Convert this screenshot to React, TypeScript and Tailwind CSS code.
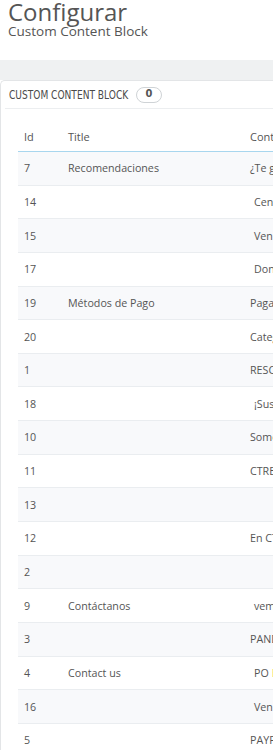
const rows: { id: string; title: string; content: string; pad?: boolean; extra?: string }[] = [
  { id: "7", title: "Recomendaciones", content: "¿Te gustaría recibir recomendaciones?" },
  { id: "14", title: "", content: "Centro de ayuda", pad: true },
  { id: "15", title: "", content: "Vende con nosotros", pad: true },
  { id: "17", title: "", content: "Dona ahora", pad: true },
  { id: "19", title: "Métodos de Pago", content: "Pagar con tarjeta" },
  { id: "20", title: "", content: "Categorías" },
  { id: "1", title: "", content: "RESCATE" },
  { id: "18", title: "", content: "¡Suscríbete!", pad: true },
  { id: "10", title: "", content: "Somos" },
  { id: "11", title: "", content: "CTRESCATE" },
  { id: "13", title: "", content: "" },
  { id: "12", title: "", content: "En CTRESCATE" },
  { id: "2", title: "", content: "" },
  { id: "9", title: "Contáctanos", content: "vemos", pad: true },
  { id: "3", title: "", content: "PANDEMIA" },
  { id: "4", title: "Contact us", content: "PO", pad: true, extra: "Box" },
  { id: "16", title: "", content: "Vende", pad: true },
  { id: "5", title: "", content: "PAYPAL" },
];

export default function App() {
  return (
    <div className="w-[273px] h-[750px] overflow-hidden bg-white text-[#555] font-['Open_Sans',sans-serif]">
      <div className="h-[60px] pl-2">
        <h1 className="text-[24px] leading-[24px] text-[#555]">Configurar</h1>
        <p className="text-[13.5px] leading-[15px] text-[#555]">Custom Content Block</p>
      </div>
      <div className="h-[20px] bg-[#eff1f2]" />
      <div className="border-t border-l border-[#e3e5e7] rounded-tl-[5px] bg-white">
        <div className="ml-[4px] h-[28px] border-b border-[#eceef0] flex items-center pl-[4px]">
          <span className="w-[121px] shrink-0 text-[12px] text-[#4a4a4a] font-['Liberation_Sans_Narrow','DejaVu_Sans_Condensed',sans-serif] scale-x-[0.84] origin-left whitespace-nowrap">
            CUSTOM CONTENT BLOCK
          </span>
          <span className="ml-[6px] h-[16px] w-[26px] rounded-full border border-[#cfd3d6] flex items-center justify-center text-[11px] font-bold text-[#555] font-['Liberation_Sans_Narrow','DejaVu_Sans_Condensed',sans-serif]">
            0
          </span>
        </div>
        <div className="ml-[17px] mt-[11px] w-[420px] text-[10.7px]">
          <div className="h-[32px] pt-[4px] flex items-center border-b border-[#a8d6ee] text-[#555] text-[11px]">
            <div className="w-[44px] shrink-0 pl-[6px]">Id</div>
            <div className="w-[182px] shrink-0 pl-[6px]">Title</div>
            <div className="pl-[6px]">Content</div>
          </div>
          {rows.map((r, i) => (
            <div
              key={r.id}
              className={`h-[33.65px] flex items-center border-b border-[#eaedf0] whitespace-nowrap ${i % 2 === 0 ? "bg-[#f8f9fb]" : "bg-white"}`}
            >
              <div className="w-[44px] shrink-0 pl-[6px]">{r.id}</div>
              <div className="w-[182px] shrink-0 pl-[6px]">{r.title}</div>
              <div className={r.pad ? "pl-[10px]" : "pl-[6px]"}>
                {r.content}
                {r.extra && <span className="ml-[3px] text-[#f2c94c]">{r.extra}</span>}
              </div>
            </div>
          ))}
        </div>
      </div>
    </div>
  );
}
